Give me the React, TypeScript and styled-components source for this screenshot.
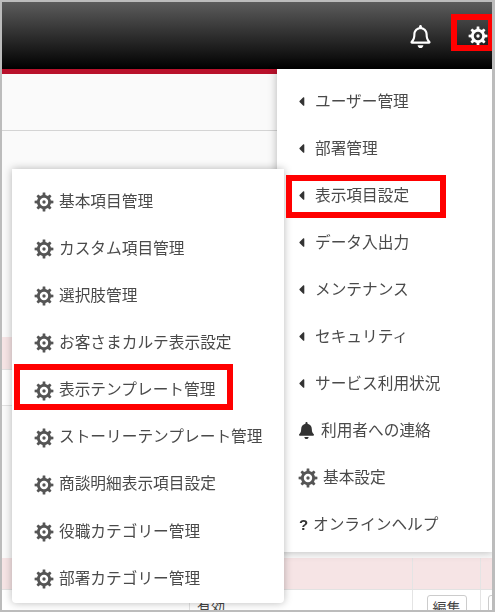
import React from "react";
import styled, { createGlobalStyle } from "styled-components";
import { FaBell, FaRegBell, FaCaretLeft } from "react-icons/fa";

const Global = createGlobalStyle`
  html, body { margin: 0; padding: 0; background: #fff; }
  * { box-sizing: border-box; }
`;

const Page = styled.div`
  position: relative;
  width: 495px;
  height: 612px;
  overflow: hidden;
  border: solid #bcbcbc;
  border-width: 2px 3px 2px 2px;
  background: #fafafa;
  font-family: "Noto Sans CJK JP", "Inter", sans-serif;
  display: flex;
  flex-direction: column;
`;

const Header = styled.header`
  height: 67px;
  flex: none;
  background: linear-gradient(#5c5c5c, #000);
  display: flex;
  justify-content: flex-end;
  align-items: center;
  gap: 36px;
  padding: 0 4px 0 0;
  color: #fff;
`;

const BellSlot = styled.span`
  display: flex;
  position: relative;
  top: 1px;
  filter: blur(0.3px);
`;

const CogSlot = styled.span`
  display: flex;
  filter: blur(0.3px);
`;

const RedBar = styled.div`
  width: 275px;
  height: 5px;
  flex: none;
  background: #b8112b;
`;

const Toolbar = styled.div`
  height: 57px;
  flex: none;
  border-bottom: 1px solid #d4d4d4;
`;

const Gap = styled.div<{ $h: number }>`
  height: ${(p) => p.$h}px;
  flex: none;
`;

const Row = styled.div<{ $h: number; $pink?: boolean }>`
  height: ${(p) => p.$h}px;
  flex: none;
  display: grid;
  grid-template-columns: 188px 223px 68px 1fr;
  background: ${(p) => (p.$pink ? "#f6e4e5" : "#fff")};
  border-bottom: 1px solid #e2e2e2;
  font-size: 14px;
  color: #444;
  line-height: 20px;
`;

const Cell = styled.div<{ $center?: boolean }>`
  border-right: 1px solid #e4e4e4;
  padding: 5px 7px 0;
  white-space: nowrap;
  overflow: visible;
  text-align: ${(p) => (p.$center ? "center" : "left")};
`;

const EditButton = styled.span`
  display: inline-block;
  width: 40px;
  height: 24px;
  border: 1px solid #ccc;
  border-radius: 3px;
  background: #fff;
  font-size: 14px;
  text-align: center;
  line-height: 22px;
`;

const Menu = styled.nav<{ $side: "left" | "right" }>`
  position: absolute;
  background: #fff;
  box-shadow: 0 0 9px rgba(0, 0, 0, 0.28);
  color: #4a4a4a;
  font-size: 15.7px;
  ${(p) =>
    p.$side === "left"
      ? `left: 10px; top: 167px; width: 272px; height: 434px; padding-top: 8.5px; border-radius: 0 0 4px 4px;`
      : `left: 275px; top: 67px; width: 216px; height: 483px; padding-top: 8.5px;`}
`;

const Item = styled.div<{ $side: "left" | "right"; $rowH: number }>`
  height: ${(p) => p.$rowH}px;
  display: flex;
  align-items: center;
  white-space: nowrap;
  padding-left: ${(p) => (p.$side === "left" ? 22 : 21)}px;
  filter: blur(0.3px);
`;

const Glyph = styled.span<{ $w: number }>`
  width: ${(p) => p.$w}px;
  flex: none;
  display: flex;
  align-items: center;
  color: #555;
  position: relative;
  top: 1px;
`;

const CaretGlyph = styled(Glyph)`
  top: 0;
  margin-left: -4px;
  color: #333;
`;

const Question = styled.span`
  width: 15px;
  flex: none;
  font-family: "Liberation Sans", sans-serif;
  font-weight: 700;
  font-size: 15px;
  color: #333;
  position: relative;
  left: 1px;
`;

const DarkGlyph = styled(Glyph)`
  color: #333;
  top: 0;
`;

const Label = styled.span`
  position: relative;
  top: -1px;
`;

const Highlight = styled.div<{ $l: number; $t: number; $w: number; $h: number }>`
  position: absolute;
  left: ${(p) => p.$l}px;
  top: ${(p) => p.$t}px;
  width: ${(p) => p.$w}px;
  height: ${(p) => p.$h}px;
  border: 6px solid #ff0000;
`;

/* Eight-toothed cog with a ring-shaped hole and a small hub, drawn around (0,0). */
function cogPath(): string {
  const pts: string[] = [];
  const teeth = 8;
  for (let i = 0; i < teeth; i++) {
    const a = (i / teeth) * Math.PI * 2;
    const step = (Math.PI * 2) / teeth;
    const corners: [number, number][] = [
      [6.7, -step * 0.5],
      [6.7, -step * 0.27],
      [9, -step * 0.17],
      [9, step * 0.17],
      [6.7, step * 0.27],
    ];
    corners.forEach(([r, d]) => {
      const x = r * Math.cos(a + d);
      const y = r * Math.sin(a + d);
      pts.push(`${x.toFixed(2)} ${y.toFixed(2)}`);
    });
  }
  const circle = (r: number) => `M${-r} 0a${r} ${r} 0 1 0 ${2 * r} 0a${r} ${r} 0 1 0 ${-2 * r} 0Z`;
  return `M${pts.join("L")}Z${circle(4)}${circle(1.6)}`;
}

const COG = cogPath();

function Cog({ size }: { size: number }) {
  return (
    <svg width={size} height={size} viewBox="-9.5 -9.5 19 19" fill="currentColor" fillRule="evenodd">
      <path d={COG} />
    </svg>
  );
}

const rightItems = ["ユーザー管理", "部署管理", "表示項目設定", "データ入出力", "メンテナンス", "セキュリティ", "サービス利用状況"];
const leftItems = [
  "基本項目管理",
  "カスタム項目管理",
  "選択肢管理",
  "お客さまカルテ表示設定",
  "表示テンプレート管理",
  "ストーリーテンプレート管理",
  "商談明細表示項目設定",
  "役職カテゴリー管理",
  "部署カテゴリー管理",
];

export default function App() {
  return (
    <Page>
      <Global />
      <Header>
        <BellSlot>
          <FaRegBell size={23} />
        </BellSlot>
        <CogSlot>
          <Cog size={20} />
        </CogSlot>
      </Header>
      <RedBar />
      <Toolbar />
      <Gap $h={206} />
      <Row $h={33} $pink>
        <Cell />
        <Cell />
        <Cell />
        <Cell />
      </Row>
      <Row $h={36}>
        <Cell />
        <Cell />
        <Cell />
        <Cell />
      </Row>
      <Gap $h={152} />
      <Row $h={32} $pink>
        <Cell />
        <Cell />
        <Cell />
        <Cell />
      </Row>
      <Row $h={30}>
        <Cell />
        <Cell>有効</Cell>
        <Cell $center>
          <EditButton>編集</EditButton>
        </Cell>
        <Cell>
          <EditButton />
        </Cell>
      </Row>

      <Menu $side="right">
        {rightItems.map((t) => (
          <Item key={t} $side="right" $rowH={47}>
            <CaretGlyph $w={21}>
              <FaCaretLeft size={15} />
            </CaretGlyph>
            <Label>{t}</Label>
          </Item>
        ))}
        <Item $side="right" $rowH={47}>
          <DarkGlyph $w={23}>
            <FaBell size={17} />
          </DarkGlyph>
          <Label>利用者への連絡</Label>
        </Item>
        <Item $side="right" $rowH={47}>
          <Glyph $w={25}>
            <Cog size={20} />
          </Glyph>
          <Label>基本設定</Label>
        </Item>
        <Item $side="right" $rowH={47}>
          <Question>?</Question>
          <Label>オンラインヘルプ</Label>
        </Item>
      </Menu>

      <Menu $side="left">
        {leftItems.map((t) => (
          <Item key={t} $side="left" $rowH={47.15}>
            <Glyph $w={25}>
              <Cog size={20} />
            </Glyph>
            <Label>{t}</Label>
          </Item>
        ))}
      </Menu>

      <Highlight $l={449} $t={12} $w={43} $h={37} />
      <Highlight $l={284} $t={173} $w={160} $h={43} />
      <Highlight $l={12} $t={362} $w={219} $h={46} />
    </Page>
  );
}
